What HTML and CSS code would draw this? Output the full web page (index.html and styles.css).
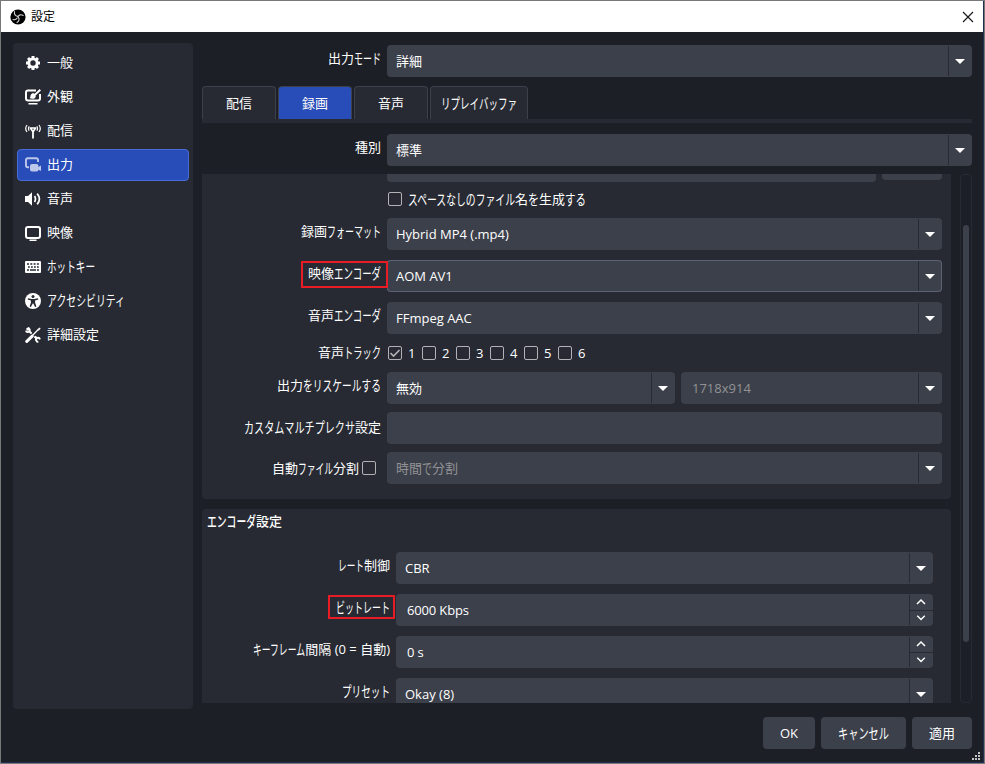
FILE: index.html
```html
<!DOCTYPE html>
<html lang="ja">
<head>
<meta charset="utf-8">
<title>設定</title>
<link rel="stylesheet" href="styles.css">
</head>
<body>
<div class="window">
  <header class="titlebar">
    <svg class="logo" width="16" height="16" viewBox="0 0 16 16"><circle cx="8" cy="8" r="7.600" fill="#000"/><g fill="none" stroke="#d0d0d0" stroke-width="1.100" stroke-linecap="round"><path d="M4.500 2.600C4.200 5 5.400 7 7.800 7.400"/><path d="M13.200 6.500C11.200 5.200 9 5.800 8 7.600"/><path d="M7 13.400C9.200 12.300 9.700 10 8.200 8.200"/><path d="M3 10.500C4.600 11 6.300 10.400 7.200 9"/></g></svg>
    <span>設定</span>
    <svg class="close" width="12" height="12" viewBox="0 0 12 12"><path d="M1 1l10 10M11 1L1 11" stroke="#111" stroke-width="1.1"/></svg>
  </header>
  <div class="body">
    <nav class="sidebar">
      <div class="item"><svg width="16" height="16" viewBox="0 0 16 16"><g fill="#fff"><path fill-rule="evenodd" d="M8 2.4a5.6 5.6 0 100 11.2A5.6 5.6 0 008 2.4zM8 5.3a2.7 2.7 0 110 5.4 2.7 2.7 0 010-5.4z"/><path d="M6.5 1h3v3h-3zM6.5 12h3v3h-3zM1 6.5h3v3H1zM12 6.5h3v3h-3zM2 4.1L4.1 2l2 2-2.1 2.1zM14 4.1L11.900 2l-2 2 2.100 2.100zM2 11.900L4.100 14l2-2L4 9.900zM14 11.900L11.900 14l-2-2L12 9.900z"/></g></svg><span>一般</span></div>
      <div class="item"><svg width="16" height="16" viewBox="0 0 16 16"><path d="M11 1.400H3Q1 1.400 1 3.400v6.200q0 2 2 2h10q2 0 2-2V5" fill="none" stroke="#fff" stroke-width="2"/><path d="M3.500 14h9v1.600h-9zM14.600 0L16 1.400 10.600 6.600 9.200 5.200zM8.600 4.200c2 .5 2.400 2.400 2 3.700-.8 2.300-4 2.300-6 1.200 1.200-.6.500-2 1.200-3.300.6-1.200 1.500-1.800 2.800-1.600z" fill="#fff"/></svg><span>外観</span></div>
      <div class="item"><svg width="16" height="16" viewBox="0 0 16 16"><g fill="none" stroke="#fff" stroke-width="1.200"><path d="M2 2Q-.6 5.500 2 9M14 2q2.600 3.500 0 7M4.200 3.400q-1.400 2.100 0 4.200M11.800 3.400q1.400 2.100 0 4.200"/></g><path d="M4.700 4.200h6.600v1.300L8.900 9v6.500H7.100V9L4.700 5.500z" fill="#fff"/><path d="M7 5.700h2L8 7.300z" fill="#272a33"/></svg><span>配信</span></div>
      <div class="item selected"><svg width="16" height="16" viewBox="0 0 16 16"><path d="M4 10.300H2.900Q1 10.300 1 8.400V3.200q0-1.900 1.900-1.900h8.200Q13 1.300 13 3.200V5" fill="none" stroke="#bcc7eb" stroke-width="1.900"/><rect x="5" y="7" width="8.500" height="7.600" rx="2" fill="#bcc7eb"/><path d="M12 10.700L16 8.500v5.600l-4-2z" fill="#bcc7eb"/></svg><span>出力</span></div>
      <div class="item"><svg width="16" height="16" viewBox="0 0 16 16"><path d="M0 5h3l4-3.800v13.600L3 11H0z" fill="#fff"/><path d="M9.500 5q2 3 0 6M12.200 2.600q4.400 5.400 0 10.800" fill="none" stroke="#fff" stroke-width="1.700"/></svg><span>音声</span></div>
      <div class="item"><svg width="16" height="16" viewBox="0 0 16 16"><rect x="1" y="2" width="14" height="11" rx="2" fill="none" stroke="#fff" stroke-width="2"/><path d="M4.500 14.500h7V16h-7z" fill="#fff"/></svg><span>映像</span></div>
      <div class="item"><svg width="16" height="16" viewBox="0 0 16 16"><rect y="2" width="16" height="12" rx="1" fill="#fff"/><g stroke="#272a33" stroke-width="1.500" fill="none"><path d="M2 5h12" stroke-dasharray="2 1.300"/><path d="M3 8h11" stroke-dasharray="1.800 1.200"/><path d="M2 11h2M5 11h6M12 11h2"/></g></svg><span><b class="k" data-w="48">ホットキー</b></span></div>
      <div class="item"><svg width="16" height="16" viewBox="0 0 16 16"><circle cx="8" cy="8" r="8" fill="#fff"/><g fill="#272a33"><circle cx="8" cy="3.600" r="1.500"/><path d="M3 5.200l3.500.8h3l3.500-.8.300 1.200-3.200 1v2.300l1.300 3.800-1.300.5L8.300 10.500h-.6L5.900 14l-1.300-.5 1.300-3.800V7.400l-3.200-1z"/></g></svg><span><b class="k" data-w="78">アクセシビリティ</b></span></div>
      <div class="item"><svg width="16" height="16" viewBox="0 0 16 16"><path d="M4.500 4.500l7.500 7.500" stroke="#fff" stroke-width="2"/><path d="M2.500 13.800l8.500-9" stroke="#272a33" stroke-width="4"/><path d="M1.800 14.400l5.400-5.200" stroke="#fff" stroke-width="3" stroke-linecap="round"/><path d="M7 9l6-6.200" stroke="#fff" stroke-width="1.300"/><path d="M12.200 2.200L14.800.4l.9.900-1.900 2.500z" fill="#fff"/><path d="M1.500 1.300l2 2M.8 3.600c1 2.600 4.800 1.200 3.900-1.200C4.400 1.300 3.600.8 2.700.8" fill="none" stroke="#fff" stroke-width="1.700"/><path d="M15 12.300c-1-2.600-4.600-1.500-3.900 1 .3 1.200 1.200 1.700 2.200 1.700M10 9.500l2 2" fill="none" stroke="#fff" stroke-width="2"/></svg><span>詳細設定</span></div>
    </nav>
    <main class="content">
      <div class="row"><label class="label">出力<b class="k" data-w="27">モード</b></label><div class="field combo">詳細</div></div>
      <div class="tabs">
        <div class="tab">配信</div><div class="tab active">録画</div><div class="tab">音声</div><div class="tab wide"><b class="k" data-w="76">リプレイバッファ</b></div>
      </div>
      <div class="row"><label class="label">種別</label><div class="field combo">標準</div></div>
      <div class="viewport">
        <div class="groups">
          <section class="group recording">
            <div class="path"><div class="path-field"></div><div class="path-button"></div></div>
            <div class="option"><i class="check"></i><span><b class="k" data-w="107">スペースなしのファイル</b>名<b class="k" data-w="11">を</b>生成<b class="k" data-w="21">する</b></span></div>
            <div class="row"><label class="label">録画<b class="k" data-w="54">フォーマット</b></label><div class="field combo">Hybrid MP4 (.mp4)</div></div>
            <div class="row"><label class="label">映像<b class="k" data-w="47">エンコーダ</b><i class="mark mark-encoder"></i></label><div class="field combo focus">AOM AV1</div></div>
            <div class="row"><label class="label">音声<b class="k" data-w="47">エンコーダ</b></label><div class="field combo">FFmpeg AAC</div></div>
            <div class="row tracks"><label class="label level">音声<b class="k" data-w="37">トラック</b></label><div class="track-list">
              <span><i class="check"><svg width="12" height="12" viewBox="0 0 12 12"><path d="M1.500 6l3 3 6-6" fill="none" stroke="#b4b4b6" stroke-width="1.600"/></svg></i>1</span><span><i class="check"></i>2</span><span><i class="check"></i>3</span><span><i class="check"></i>4</span><span><i class="check"></i>5</span><span><i class="check"></i>6</span></div></div>
            <div class="row tight first"><label class="label">出力<b class="k" data-w="78">をリスケールする</b></label><div class="field combo rescale">無効</div><div class="field combo disabled size">1718x914</div></div>
            <div class="row tight"><label class="label level"><b class="k" data-w="111">カスタムマルチプレクサ</b>設定</label><div class="field"></div></div>
            <div class="row tight"><label class="label level split">自動<b class="k" data-w="35">ファイル</b>分割<i class="check"></i></label><div class="field combo disabled">時間<b class="k" data-w="10">で</b>分割</div></div>
          </section>
          <section class="group encoder">
            <h2><b class="k" data-w="49">エンコーダ</b>設定</h2>
            <div class="row"><label class="label"><b class="k" data-w="26">レート</b>制御</label><div class="field combo">CBR</div></div>
            <div class="row"><label class="label"><b class="k" data-w="54">ビットレート</b><i class="mark mark-bitrate"></i></label><div class="field spin">6000 Kbps<div class="steps"><svg viewBox="0 0 23 15"><path d="M7 9l4-4 4 4"/></svg><svg viewBox="0 0 23 15"><path d="M7 5l4 4 4-4"/></svg></div></div></div>
            <div class="row"><label class="label"><b class="k" data-w="52">キーフレーム</b>間隔 (0 = 自動)</label><div class="field spin">0 s<div class="steps"><svg viewBox="0 0 23 15"><path d="M7 9l4-4 4 4"/></svg><svg viewBox="0 0 23 15"><path d="M7 5l4 4 4-4"/></svg></div></div></div>
            <div class="row"><label class="label"><b class="k" data-w="48">プリセット</b></label><div class="field combo">Okay (8)</div></div>
          </section>
        </div>
        <div class="scrollbar"><div class="thumb"></div></div>
      </div>
    </main>
  </div>
  <footer class="footer">
    <div class="button ok">OK</div><div class="button cancel"><b class="k" data-w="51">キャンセル</b></div><div class="button apply">適用</div>
    <svg class="grip" width="8" height="8" viewBox="0 0 8 8"><path d="M6 0h2v2H6zM3 3h2v2H3zM6 3h2v2H6zM0 6h2v2H0zM3 6h2v2H3zM6 6h2v2H6z" fill="#c4c4c4"/></svg>
  </footer>
</div>
<script src="kana.js"></script>
</body>
</html>
```
FILE: kana.js
```js
// Condenses kana runs to the narrow UI widths given in data-w.
document.querySelectorAll('.k').forEach(function (run) {
  var natural = run.getBoundingClientRect().width;
  var target = Number(run.dataset.w);
  run.style.transform = 'scale(' + target / natural + ', 1.12)';
  run.style.marginRight = (target - natural) + 'px';
});
```
FILE: styles.css
```css
* { box-sizing: border-box; }
body {
  margin: 0;
  background: #1d1f26;
  color: #fff;
  font: 13px/20px "Open Sans", "Noto Sans CJK JP", sans-serif;
  overflow: hidden;
}
.window {
  width: 985px;
  height: 764px;
  border: 1px solid #777879;
  display: flex;
  flex-direction: column;
  box-shadow: inset -1px -1px #213050;
}
.titlebar {
  height: 31px;
  margin-right: 1px;
  padding: 0 9px 0 9px;
  background: #fff;
  color: #000;
  display: flex;
  align-items: center;
  gap: 5px;
  font-size: 12px;
  flex: none;
}
.close { margin-left: auto; }
.k { display: inline-block; font-weight: inherit; transform-origin: left center; white-space: nowrap; }
.body { display: flex; gap: 9px; height: 677px; padding: 11px 12px 0; flex: none; }
.sidebar {
  width: 180px;
  height: 666px;
  padding: 4px;
  background: #272a33;
  border-radius: 4px;
  display: flex;
  flex-direction: column;
  gap: 2px;
}
.item {
  height: 32px;
  width: 172px;
  padding-left: 7px;
  border: 1px solid transparent;
  border-radius: 4px;
  display: flex;
  align-items: center;
  gap: 6px;
}
.item svg { flex: none; }
.item span { padding-bottom: 2px; }
.selected { background: #284cb8; border-color: #476bd7; }
.content { width: 770px; padding-top: 2px; flex: none; }
.row { display: flex; height: 32px; }
.label {
  position: relative;
  width: 185px;
  height: 28px;
  padding: 0 6px 2px 0;
  display: flex;
  align-items: center;
  justify-content: flex-end;
  white-space: pre;
  flex: none;
}
.level { height: 32px; }
.field {
  position: relative;
  flex: 1;
  height: 32px;
  padding: 0 9px;
  background: #3c404b;
  border-radius: 4px;
  display: flex;
  align-items: center;
}
.combo::before {
  content: "";
  position: absolute;
  right: 23px;
  top: 1px;
  bottom: 1px;
  width: 1px;
  background: #272a33;
}
.combo::after {
  content: "";
  position: absolute;
  right: 7px;
  top: 14px;
  border: 5px solid transparent;
  border-top-color: #fff;
  border-bottom: 0;
}
.focus { box-shadow: inset 0 0 0 1px #5b6273; }
.disabled { color: #929294; }
.tabs {
  display: flex;
  gap: 2px;
  height: 37px;
  margin: 9px 0 11px;
  border-bottom: 4px solid #272a33;
}
.tab {
  width: 74px;
  height: 33px;
  background: #272a33;
  border: 1px solid #3c404b;
  border-bottom: 0;
  border-radius: 4px 4px 0 0;
  display: flex;
  align-items: center;
  justify-content: center;
  padding-bottom: 1px;
}
.active { background: #284cb8; }
.wide { width: 98px; }
.viewport { display: flex; gap: 9px; height: 529px; margin-top: 8px; overflow: hidden; }
.groups { width: 749px; display: flex; flex-direction: column; gap: 10px; }
.group { background: #272a33; border-radius: 4px; flex: none; }
.recording { height: 325px; padding-right: 9px; border-radius: 0 0 4px 4px; }
.recording .row + .row { margin-top: 10px; }
.path { display: flex; gap: 6px; height: 8px; padding-left: 185px; }
.path-field { width: 489px; height: 8px; background: #3c404b; border-radius: 0 0 4px 4px; }
.path-button { width: 60px; height: 6px; background: #3c404b; border-radius: 0 0 4px 4px; }
.option { display: flex; align-items: center; gap: 6px; height: 20px; margin: 7px 0 9px; padding-left: 186px; }
.option span { padding-bottom: 1px; }
.check { width: 14px; height: 14px; border: 1px solid #b2b2b6; border-radius: 2px; display: flex; flex: none; }
.recording .row + .tracks { height: 20px; margin-top: 9px; }
.tracks .label { height: 20px; }
.track-list { display: flex; padding-left: 1px; }
.track-list span { width: 34px; display: flex; align-items: center; gap: 6px; }
.recording .row + .tight { margin-top: 8px; }
.recording .row + .first { margin-top: 9px; }
.rescale { flex: 0 0 288px; margin-right: 6px; }
.size { padding-left: 11px; }
.split { padding: 0 11px 0 0; }
.split .check { margin-left: 3px; }
.encoder { height: 205px; padding-right: 18px; border-radius: 4px 4px 0 0; }
.encoder h2 { margin: 0; height: 43px; padding: 2px 0 0 5px; font: 500 13px/20px "Open Sans", "Noto Sans CJK JP", sans-serif; }
.encoder .label { width: 194px; }
.encoder .row + .row { margin-top: 10px; }
.spin { padding-left: 11px; letter-spacing: -.15px; }
.steps {
  position: absolute;
  right: 0;
  top: 1px;
  width: 24px;
  height: 30px;
  border-left: 1px solid #272a33;
}
.steps svg { display: block; width: 23px; height: 15px; fill: none; stroke: #fff; stroke-width: 1.5; }
.steps svg + svg { border-top: 1px solid #272a33; }
.mark { position: absolute; border: 2px solid #e81c24; }
.mark-encoder { left: 99px; top: 1px; width: 87px; height: 27px; z-index: 1; }
.mark-bitrate { left: 126px; top: 1px; width: 67px; height: 24px; }
.scrollbar { width: 12px; height: 529px; padding: 50px 2px 0; border: 1px solid #272a33; border-radius: 4px; }
.thumb { width: 6px; height: 417px; background: #3c404b; border-radius: 3px; }
.footer { position: relative; display: flex; justify-content: flex-end; gap: 6px; padding: 8px 12px 0 0; }
.button { height: 32px; background: #3c404b; border-radius: 4px; display: flex; align-items: center; justify-content: center; }
.ok { width: 52px; }
.cancel { width: 85px; }
.apply { width: 60px; }
.grip { position: absolute; right: 4px; top: 43px; }
```
